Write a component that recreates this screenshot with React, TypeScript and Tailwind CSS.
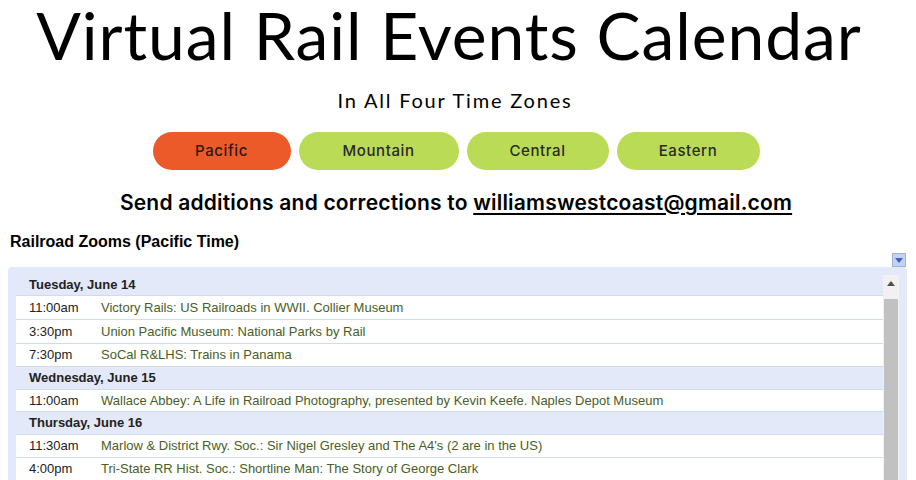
import React from "react";

type Row =
  | { kind: "day"; label: string; h: number }
  | { kind: "ev"; time: string; title: string; h: number };

const rows: Row[] = [
  { kind: "day", label: "Tuesday, June 14", h: 22 },
  { kind: "ev", time: "11:00am", title: "Victory Rails: US Railroads in WWII. Collier Museum", h: 24 },
  { kind: "ev", time: "3:30pm", title: "Union Pacific Museum: National Parks by Rail", h: 24 },
  { kind: "ev", time: "7:30pm", title: "SoCal R&LHS: Trains in Panama", h: 23 },
  { kind: "day", label: "Wednesday, June 15", h: 23 },
  { kind: "ev", time: "11:00am", title: "Wallace Abbey: A Life in Railroad Photography, presented by Kevin Keefe. Naples Depot Museum", h: 22 },
  { kind: "day", label: "Thursday, June 16", h: 23 },
  { kind: "ev", time: "11:30am", title: "Marlow & District Rwy. Soc.: Sir Nigel Gresley and The A4's (2 are in the US)", h: 23 },
  { kind: "ev", time: "4:00pm", title: "Tri-State RR Hist. Soc.: Shortline Man: The Story of George Clark", h: 23 },
  { kind: "ev", time: "7:00pm", title: "Amtrak History", h: 23 },
];

export default function App() {
  return (
    <div className="w-[916px] h-[480px] overflow-hidden bg-white">
      <div className="pt-[2px] flex flex-col items-center">
        <h1
          className="h-[66px] leading-[66px] text-[66px] text-black tracking-[0.9px] whitespace-nowrap pr-[18px]"
          style={{ fontFamily: "Lato, 'DejaVu Sans', sans-serif" }}
        >
          Virtual Rail Events Calendar
        </h1>
        <div
          className="mt-[22px] h-[20px] leading-[20px] text-[20px] text-black tracking-[1.8px] whitespace-nowrap pr-[6px]"
          style={{ fontFamily: "Lato, 'DejaVu Sans', sans-serif" }}
        >
          In All Four Time Zones
        </div>
        <div
          className="mt-[22px] flex gap-[8px] pr-[4px]"
          style={{ fontFamily: "Inter, 'Noto Sans', sans-serif" }}
        >
          <div className="w-[138px] h-[38px] rounded-full bg-[#ec5a2a] text-[#2a1a12] text-[15px] font-medium tracking-[0.6px] flex items-center justify-center">
            Pacific
          </div>
          <div className="w-[160px] h-[38px] rounded-full bg-[#badb55] text-[#2a2a2a] text-[15px] font-medium tracking-[0.6px] flex items-center justify-center">
            Mountain
          </div>
          <div className="w-[142px] h-[38px] rounded-full bg-[#badb55] text-[#2a2a2a] text-[15px] font-medium tracking-[0.6px] flex items-center justify-center">
            Central
          </div>
          <div className="w-[143px] h-[38px] rounded-full bg-[#badb55] text-[#2a2a2a] text-[15px] font-medium tracking-[0.6px] flex items-center justify-center">
            Eastern
          </div>
        </div>
        <div
          className="mt-[21px] h-[24px] leading-[24px] text-[21px] font-semibold text-black tracking-[0.2px] whitespace-nowrap pr-[4px]"
          style={{ fontFamily: "Inter, 'Noto Sans', sans-serif" }}
        >
          Send additions and corrections to{" "}
          <span className="underline underline-offset-[3px] decoration-[2px]">williamswestcoast@gmail.com</span>
        </div>
      </div>

      <div style={{ fontFamily: "'Liberation Sans', Arial, sans-serif" }}>
        <div className="mt-[18px] pl-[10px] h-[18px] leading-[18px] text-[16px] font-bold text-black">
          Railroad Zooms (Pacific Time)
        </div>
        <div className="mt-[2px] h-[14px] flex justify-end pr-[10px]">
          <div className="w-[14px] h-[14px] bg-[#c3d2f3] border border-[#9fb2dc] flex items-center justify-center">
            <svg width="8" height="5" viewBox="0 0 8 5">
              <path d="M0 0 L8 0 L4 5 Z" fill="#3a63c4" />
            </svg>
          </div>
        </div>
        <div className="ml-[8px] mr-[9px] h-[300px] bg-[#e3e9f8] rounded-t-[4px] pt-[7px] pl-[8px] pr-[8px] flex">
          <div className="flex-1 flex flex-col">
            {rows.map((r, i) =>
              r.kind === "day" ? (
                <div
                  key={i}
                  style={{ height: r.h }}
                  className="shrink-0 border-b border-[#d3dbe6] bg-[#e3e9f8] pl-[13px] flex items-center text-[13px] font-bold text-[#222]"
                >
                  {r.label}
                </div>
              ) : (
                <div
                  key={i}
                  style={{ height: r.h }}
                  className="shrink-0 border-b border-[#d3dbe6] bg-white pl-[13px] flex items-center text-[13px]"
                >
                  <span className="w-[72px] shrink-0 text-[#222]">{r.time}</span>
                  <span className="text-[#4a5e26] whitespace-nowrap">{r.title}</span>
                </div>
              )
            )}
          </div>
          <div className="w-[16px] shrink-0 mt-[1px] bg-[#f1f1f1] flex flex-col items-center">
            <div className="h-[16px] w-full flex items-center justify-center">
              <svg width="8" height="5" viewBox="0 0 8 5">
                <path d="M0 5 L8 5 L4 0 Z" fill="#505050" />
              </svg>
            </div>
            <div className="mt-[8px] w-[14px] h-[200px] bg-[#c1c1c1]" />
          </div>
        </div>
      </div>
    </div>
  );
}
